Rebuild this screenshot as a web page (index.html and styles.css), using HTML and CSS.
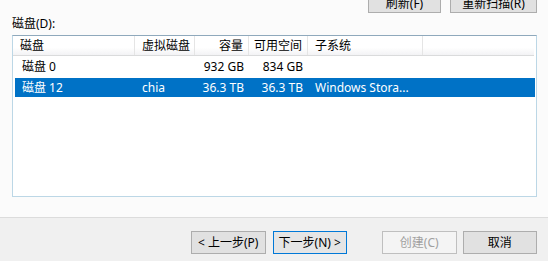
FILE: index.html
```html
<!DOCTYPE html>
<html lang="zh-CN">

<head>
    <meta charset="UTF-8">
    <title>创建存储池</title>
    <link rel="stylesheet" href="styles.css">
</head>

<body>
    <div class="content">
        <div class="top-buttons">
            <button type="button" class="btn btn-refresh">刷新(F)</button>
            <button type="button" class="btn btn-rescan">重新扫描(R)</button>
        </div>

        <div class="disk-label">磁盘(D):</div>

        <div class="disk-list">
            <div class="list-row list-header">
                <div class="cell">磁盘</div>
                <div class="cell">虚拟磁盘</div>
                <div class="cell right">容量</div>
                <div class="cell right">可用空间</div>
                <div class="cell">子系统</div>
                <div class="cell"></div>
            </div>
            <div class="list-body">
                <div class="list-row item">
                    <div class="cell">磁盘 0</div>
                    <div class="cell"></div>
                    <div class="cell right">932 GB</div>
                    <div class="cell right">834 GB</div>
                    <div class="cell"></div>
                    <div class="cell"></div>
                </div>
                <div class="list-row item selected">
                    <div class="cell">磁盘 12</div>
                    <div class="cell">chia</div>
                    <div class="cell right">36.3 TB</div>
                    <div class="cell right">36.3 TB</div>
                    <div class="cell">Windows Stora...</div>
                    <div class="cell"></div>
                </div>
            </div>
        </div>
    </div>

    <div class="footer">
        <button type="button" class="btn">&lt; 上一步(P)</button>
        <button type="button" class="btn btn-default">下一步(N) &gt;</button>
        <button type="button" class="btn btn-disabled" disabled>创建(C)</button>
        <button type="button" class="btn">取消</button>
    </div>
</body>

</html>
```

FILE: styles.css
```css
html, body {
    margin: 0;
    padding: 0;
}

body {
    width: 548px;
    height: 261px;
    overflow: hidden;
    background-color: #f0f0f0;
    font-family: "Noto Sans", "Noto Sans CJK SC", sans-serif;
    font-size: 12px;
    color: #000;
}

.content {
    display: flow-root;
    height: 217px;
    background-color: #fbfbfb;
    border-bottom: 1px solid #dcdcdc;
}

.top-buttons {
    display: flex;
    justify-content: flex-end;
    gap: 9px;
    padding-right: 11px;
    margin-top: -10px;
    height: 23px;
}

.btn {
    height: 23px;
    width: 75px;
    padding: 0;
    background-color: #e1e1e1;
    border: 1px solid #adadad;
    font-family: "Noto Sans", "Noto Sans CJK SC", sans-serif;
    font-size: 12px;
    line-height: 20px;
    color: #000;
    box-sizing: border-box;
}

.btn-refresh {
    width: 73px;
}

.btn-rescan {
    width: 87px;
}

.top-buttons .btn {
    padding-top: 5px;
    line-height: 16px;
}

.btn-default {
    border-color: #0078d7;
    background-color: #e5e5e5;
}

.btn-disabled {
    background-color: #f4f4f4;
    border-color: #bfbfbf;
    color: #a0a0a0;
}

.disk-label {
    margin: 3px 0 3px 12px;
    height: 16px;
    line-height: 16px;
}

.disk-list {
    margin: 0 11px 0 12px;
    height: 162px;
    border: 1px solid #bcd7e6;
    border-top-color: #8fa9bc;
    background-color: #fff;
    box-sizing: border-box;
}

.list-row {
    display: grid;
    grid-template-columns: 122px 60px 54px 59px 115px 1fr;
    align-items: center;
}

.list-header {
    height: 20px;
    margin-right: 2px;
    background: linear-gradient(#ffffff, #ffffff 60%, #f3f3f5);
    border-bottom: 1px solid #dadbdc;
    box-sizing: border-box;
}

.list-header .cell {
    height: 19px;
    line-height: 19px;
    border-right: 1px solid #e5e5e5;
}

.list-header .cell:last-child {
    border-right: none;
}

.cell {
    padding: 0 5px 0 7px;
    white-space: nowrap;
    overflow: hidden;
}

.cell.right {
    text-align: right;
    padding: 0 5px 0 0;
}

.list-body {
    display: flex;
    flex-direction: column;
    gap: 2px;
    padding-top: 1px;
}

.item {
    height: 19px;
    line-height: 19px;
    margin: 0 1px 0 2px;
    grid-template-columns: 120px 60px 54px 59px 115px 1fr;
}

.selected {
    background-color: #0072c6;
    color: #fff;
}

.footer {
    display: flex;
    padding: 13px 11px 0 191px;
    gap: 7px;
}

.footer .btn:nth-child(3) {
    margin-left: 28px;
}

.footer .btn:nth-child(4) {
    margin-left: -1px;
}
```
